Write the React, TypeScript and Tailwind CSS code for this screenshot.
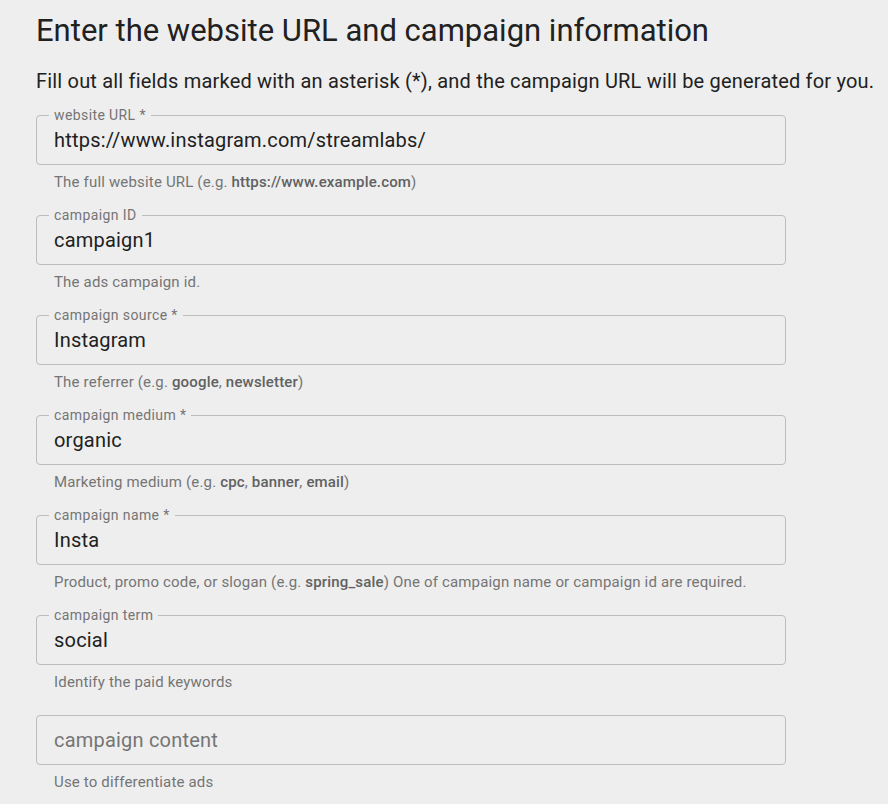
import type { ReactNode } from "react";

type Field = {
  label: string;
  value?: string;
  help: ReactNode;
};

const B = ({ children }: { children: ReactNode }) => (
  <span className="font-medium text-[#616161]">{children}</span>
);

const fields: Field[] = [
  {
    label: "website URL *",
    value: "https://www.instagram.com/streamlabs/",
    help: (
      <>
        The full website URL (e.g. <B>https://www.example.com</B>)
      </>
    ),
  },
  { label: "campaign ID", value: "campaign1", help: "The ads campaign id." },
  {
    label: "campaign source *",
    value: "Instagram",
    help: (
      <>
        The referrer (e.g. <B>google</B>, <B>newsletter</B>)
      </>
    ),
  },
  {
    label: "campaign medium *",
    value: "organic",
    help: (
      <>
        Marketing medium (e.g. <B>cpc</B>, <B>banner</B>, <B>email</B>)
      </>
    ),
  },
  {
    label: "campaign name *",
    value: "Insta",
    help: (
      <>
        Product, promo code, or slogan (e.g. <B>spring_sale</B>) One of campaign name or campaign id are
        required.
      </>
    ),
  },
  { label: "campaign term", value: "social", help: "Identify the paid keywords" },
  { label: "campaign content", help: "Use to differentiate ads" },
];

function OutlinedField({ label, value, help }: Field) {
  return (
    <div className="h-[100px]">
      <div className="relative flex h-[50px] w-[750px] items-center rounded-[4px] border border-[#bdbdbd] px-[17px]">
        {value ? (
          <>
            {/* label sits on the border */}
            <span className="absolute -top-[10px] left-[12px] bg-[#eeeeee] px-[5px] text-[14px] leading-[18px] tracking-[0.4px] text-[#757575]">
              {label}
            </span>
            <span className="text-[20px] tracking-[0.2px] text-[#212121]">{value}</span>
          </>
        ) : (
          <span className="text-[20px] tracking-[0.2px] text-[#757575]">{label}</span>
        )}
      </div>
      <p className="mt-[8px] pl-[18px] text-[15px] leading-[18px] tracking-[0.17px] text-[#757575]">{help}</p>
    </div>
  );
}

export default function App() {
  return (
    <div className="min-h-[804px] bg-[#eeeeee] px-[36px] pt-[10px] font-['Roboto',sans-serif]">
      <h2 className="text-[31px] leading-[42px] text-[#212121]">Enter the website URL and campaign information</h2>
      <p className="mt-[16px] whitespace-nowrap text-[20px] leading-[26px] tracking-[0.19px] text-[#212121]">
        Fill out all fields marked with an asterisk (*), and the campaign URL will be generated for you.
      </p>

      <div className="mt-[21px]">
        {fields.map((f) => (
          <OutlinedField key={f.label} {...f} />
        ))}
      </div>
    </div>
  );
}
